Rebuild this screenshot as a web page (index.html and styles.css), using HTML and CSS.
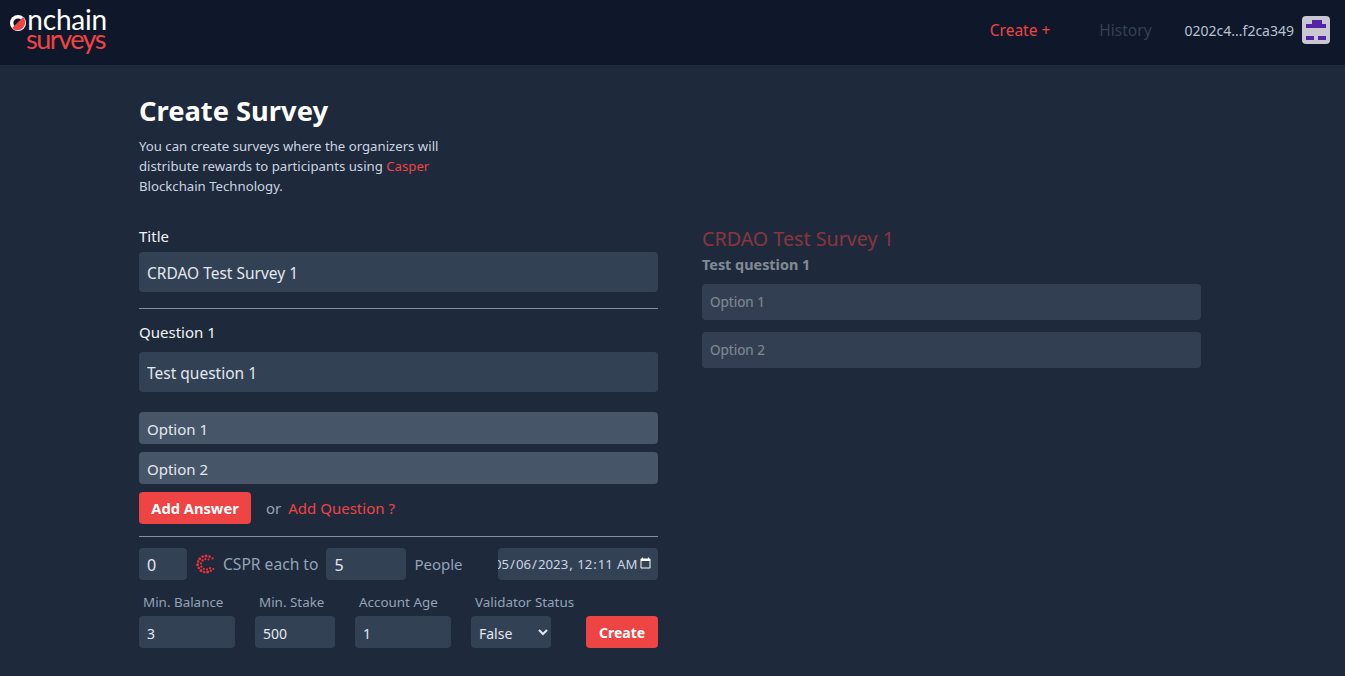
FILE: index.html
```html
<!DOCTYPE html>
<html lang="en">
<head>
    <meta charset="UTF-8">
    <title>Create Survey</title>
    <link rel="stylesheet" href="styles.css">
</head>
<body>
    <header class="topbar">
        <a class="logo" href="#">
            <svg class="logo-o" width="16" height="16" viewBox="0 0 16 16">
                <circle cx="8" cy="8" r="8" fill="#fff"/>
                <circle cx="8" cy="8" r="4.6" fill="#0f172a"/>
                <path d="M1.9 13.2 L13.2 1.9 A8 8 0 0 1 1.9 13.2 Z" fill="#ef4444"/>
            </svg>
            <span class="logo-words">
                <span class="logo-top">nchain</span>
                <span class="logo-bottom">surveys</span>
            </span>
        </a>
        <nav class="nav">
            <a class="nav-create" href="#">Create +</a>
            <a class="nav-history" href="#">History</a>
            <span class="account">0202c4...f2ca349</span>
            <svg class="avatar" width="28" height="28" viewBox="0 0 28 28">
                <rect width="28" height="28" rx="4" fill="#c9c7d2"/>
                <path d="M10 4h10v4h4v4H4V8h6zM4 20h8v4H4zM16 20h8v4h-8z" fill="#5423a8"/>
            </svg>
        </nav>
    </header>

    <main class="page">
        <form class="survey-form">
            <h1>Create Survey</h1>
            <p class="intro">You can create surveys where the organizers will distribute rewards to participants using <a href="#">Casper</a> Blockchain Technology.</p>

            <label class="field-label first">Title</label>
            <input class="text-input" type="text" value="CRDAO Test Survey 1">
            <hr>

            <label class="field-label">Question 1</label>
            <input class="text-input" type="text" value="Test question 1">
            <input class="option-input first-option" type="text" value="Option 1">
            <input class="option-input" type="text" value="Option 2">

            <div class="add-row">
                <button class="btn add-answer" type="button">Add Answer</button>
                <span class="or">or</span>
                <a href="#">Add Question ?</a>
            </div>
            <hr class="tight">

            <div class="reward-row">
                <input class="small-input w48" type="text" value="0">
                <svg class="cspr" width="20" height="20" viewBox="0 0 20 20" fill="#e8323c">
                    <circle cx="10" cy="2" r="1.5"/><circle cx="13.6" cy="2.6" r="1.3"/><circle cx="6.6" cy="2.6" r="1.3"/>
                    <circle cx="16.6" cy="4.4" r="1.1"/><circle cx="3.8" cy="4.8" r="1.5"/><circle cx="2.2" cy="7.6" r="1.3"/>
                    <circle cx="1.6" cy="10.8" r="1.5"/><circle cx="2.8" cy="14" r="1.3"/><circle cx="5" cy="16.6" r="1.5"/>
                    <circle cx="8.2" cy="18" r="1.3"/><circle cx="11.6" cy="18" r="1.5"/><circle cx="14.8" cy="16.8" r="1.2"/>
                    <circle cx="17.2" cy="15" r="1.1"/><circle cx="6.6" cy="6.4" r="1.2"/><circle cx="9.4" cy="5.2" r="1.1"/>
                    <circle cx="5" cy="9.4" r="1.1"/><circle cx="5.4" cy="12.6" r="1.2"/><circle cx="7.8" cy="14.8" r="1.1"/>
                    <circle cx="11" cy="15.4" r="1.1"/><circle cx="14" cy="14.2" r="1.1"/><circle cx="12.6" cy="5.4" r="1"/>
                </svg>
                <span class="reward-text">CSPR each to</span>
                <input class="small-input w80" type="text" value="5">
                <span class="reward-text people">People</span>
                <input class="date-input" type="datetime-local" value="2023-05-06T00:11">
            </div>

            <div class="limits-row">
                <div class="limit w96">
                    <label>Min. Balance</label>
                    <input class="small-input" type="text" value="3">
                </div>
                <div class="limit w80">
                    <label>Min. Stake</label>
                    <input class="small-input" type="text" value="500">
                </div>
                <div class="limit w96">
                    <label>Account Age</label>
                    <input class="small-input" type="text" value="1">
                </div>
                <div class="limit w80">
                    <label class="nowrap">Validator Status</label>
                    <select class="small-input status-select">
                        <option>False</option>
                        <option>True</option>
                    </select>
                </div>
                <button class="btn create" type="button">Create</button>
            </div>
        </form>

        <section class="preview">
            <h2>CRDAO Test Survey 1</h2>
            <h3>Test question 1</h3>
            <div class="preview-option">Option 1</div>
            <div class="preview-option">Option 2</div>
        </section>
    </main>
</body>
</html>
```

FILE: styles.css
```css
* {
    box-sizing: border-box;
}
body {
    margin: 0;
    min-height: 100vh;
    background-color: #1e293b;
    color: #e2e8f0;
    font-family: "Noto Sans", sans-serif;
    font-size: 15px;
    color-scheme: dark;
    overflow: hidden;
}
a {
    color: #ef4444;
    text-decoration: none;
}
input, select, button {
    font-family: inherit;
}

.topbar {
    height: 65px;
    background-color: #0f172a;
    display: flex;
    justify-content: space-between;
    align-items: flex-start;
    padding: 0 15px 0 10px;
}
.logo {
    display: flex;
    align-items: flex-start;
    padding-top: 8px;
}
.logo-o {
    margin-top: 7px;
}
.logo-words {
    display: flex;
    flex-direction: column;
    align-items: flex-end;
    margin-left: 1px;
    width: 80px;
    font-family: "Lato", sans-serif;
    font-weight: 400;
}
.logo-top {
    color: #fff;
    font-size: 28px;
    line-height: 22px;
    letter-spacing: -.2px;
}
.logo-bottom {
    color: #ef4444;
    font-size: 27px;
    line-height: 20px;
    letter-spacing: -1.5px;
    margin: -1px 2px 0 0;
}
.nav {
    display: flex;
    align-items: center;
    height: 60px;
    font-size: 15.5px;
}
.nav-create {
    margin-right: 49px;
}
.nav-history {
    color: #334155;
    margin-right: 33px;
}
.account {
    color: #b8c2d0;
    font-size: 14px;
    margin-right: 8px;
}

.page {
    display: grid;
    grid-template-columns: 519px 499px;
    column-gap: 44px;
    padding-left: 139px;
}
h1 {
    margin: 28px 0 0;
    font-size: 27.3px;
    line-height: 36px;
    font-weight: 700;
    color: #fff;
}
.intro {
    margin: 7px 0 0;
    width: 320px;
    font-size: 13.2px;
    line-height: 20px;
    color: #cbd5e1;
}
.field-label {
    display: block;
    margin-top: 11px;
    line-height: 24px;
    color: #f1f5f9;
}
.field-label.first {
    margin-top: 28px;
}
.text-input, .option-input {
    display: block;
    width: 100%;
    border: 0;
    border-radius: 4px;
    padding: 2px 8px 0;
    font-size: 15.5px;
    color: #e2e8f0;
}
.text-input {
    height: 40px;
    margin-top: 8px;
    background-color: #334155;
}
.field-label.first + .text-input {
    margin-top: 4px;
}
.option-input {
    height: 32px;
    margin-top: 8px;
    padding-top: 1px;
    background-color: #475569;
    font-size: 15px;
}
.option-input.first-option {
    margin-top: 20px;
}
hr {
    border: 0;
    border-top: 1px solid #8592a6;
    margin: 16px 0 0;
}
hr.tight {
    margin-top: 12px;
}
.btn {
    height: 32px;
    border: 0;
    border-radius: 4px;
    background-color: #ef4444;
    color: #fff;
    font-size: 14.7px;
    font-weight: 700;
}
.add-row {
    display: flex;
    align-items: center;
    margin-top: 8px;
}
.add-answer {
    width: 112px;
    padding: 0;
}
.or {
    margin: 0 7px 0 15px;
    color: #94a3b8;
}
.reward-row {
    display: flex;
    align-items: center;
    margin-top: 11px;
}
.small-input {
    height: 32px;
    width: 100%;
    border: 0;
    border-radius: 4px;
    padding: 2px 8px 0;
    background-color: #334155;
    color: #e2e8f0;
    font-size: 14px;
}
.status-select {
    padding-left: 4px;
}
.reward-row .small-input {
    font-size: 16px;
}
.w48 {
    width: 48px;
}
.w80 {
    width: 80px;
}
.w96 {
    width: 96px;
}
.cspr {
    margin: 0 7px 0 9px;
}
.reward-text {
    color: #94a3b8;
    font-size: 15.6px;
    margin-right: 8px;
}
.people {
    margin: 0 0 0 8px;
    font-size: 15px;
}
.date-input {
    margin-left: auto;
    width: 160px;
    height: 32px;
    border: 0;
    border-radius: 4px;
    padding: 0 4px 0 2px;
    background-color: #334155;
    color: #cbd5e1;
    font-size: 13.2px;
}
.date-input::-webkit-datetime-edit {
    margin-left: -7px;
}
.limits-row {
    display: flex;
    align-items: flex-end;
    column-gap: 20px;
    margin-top: 12px;
}
.limit label {
    display: block;
    margin-left: 4px;
    font-size: 13.4px;
    line-height: 20px;
    margin-bottom: 4px;
    color: #94a3b8;
}
.nowrap {
    white-space: nowrap;
}
.create {
    width: 72px;
    margin-left: 15px;
    padding: 0;
    font-size: 14px;
}

.preview {
    padding-top: 162px;
    opacity: .5;
}
h2 {
    margin: 0;
    font-size: 19.7px;
    line-height: 24px;
    font-weight: 400;
    color: #ef4444;
}
h3 {
    margin: 1px 0 0;
    font-size: 14.4px;
    line-height: 25px;
    font-weight: 700;
    color: #e2e8f0;
}
.preview-option {
    height: 36px;
    margin-bottom: 12px;
    padding: 0 8px;
    border-radius: 4px;
    background-color: #475569;
    color: #e2e8f0;
    font-size: 13.5px;
    line-height: 36px;
}
.preview h3 + .preview-option {
    margin-top: 7px;
}
```
